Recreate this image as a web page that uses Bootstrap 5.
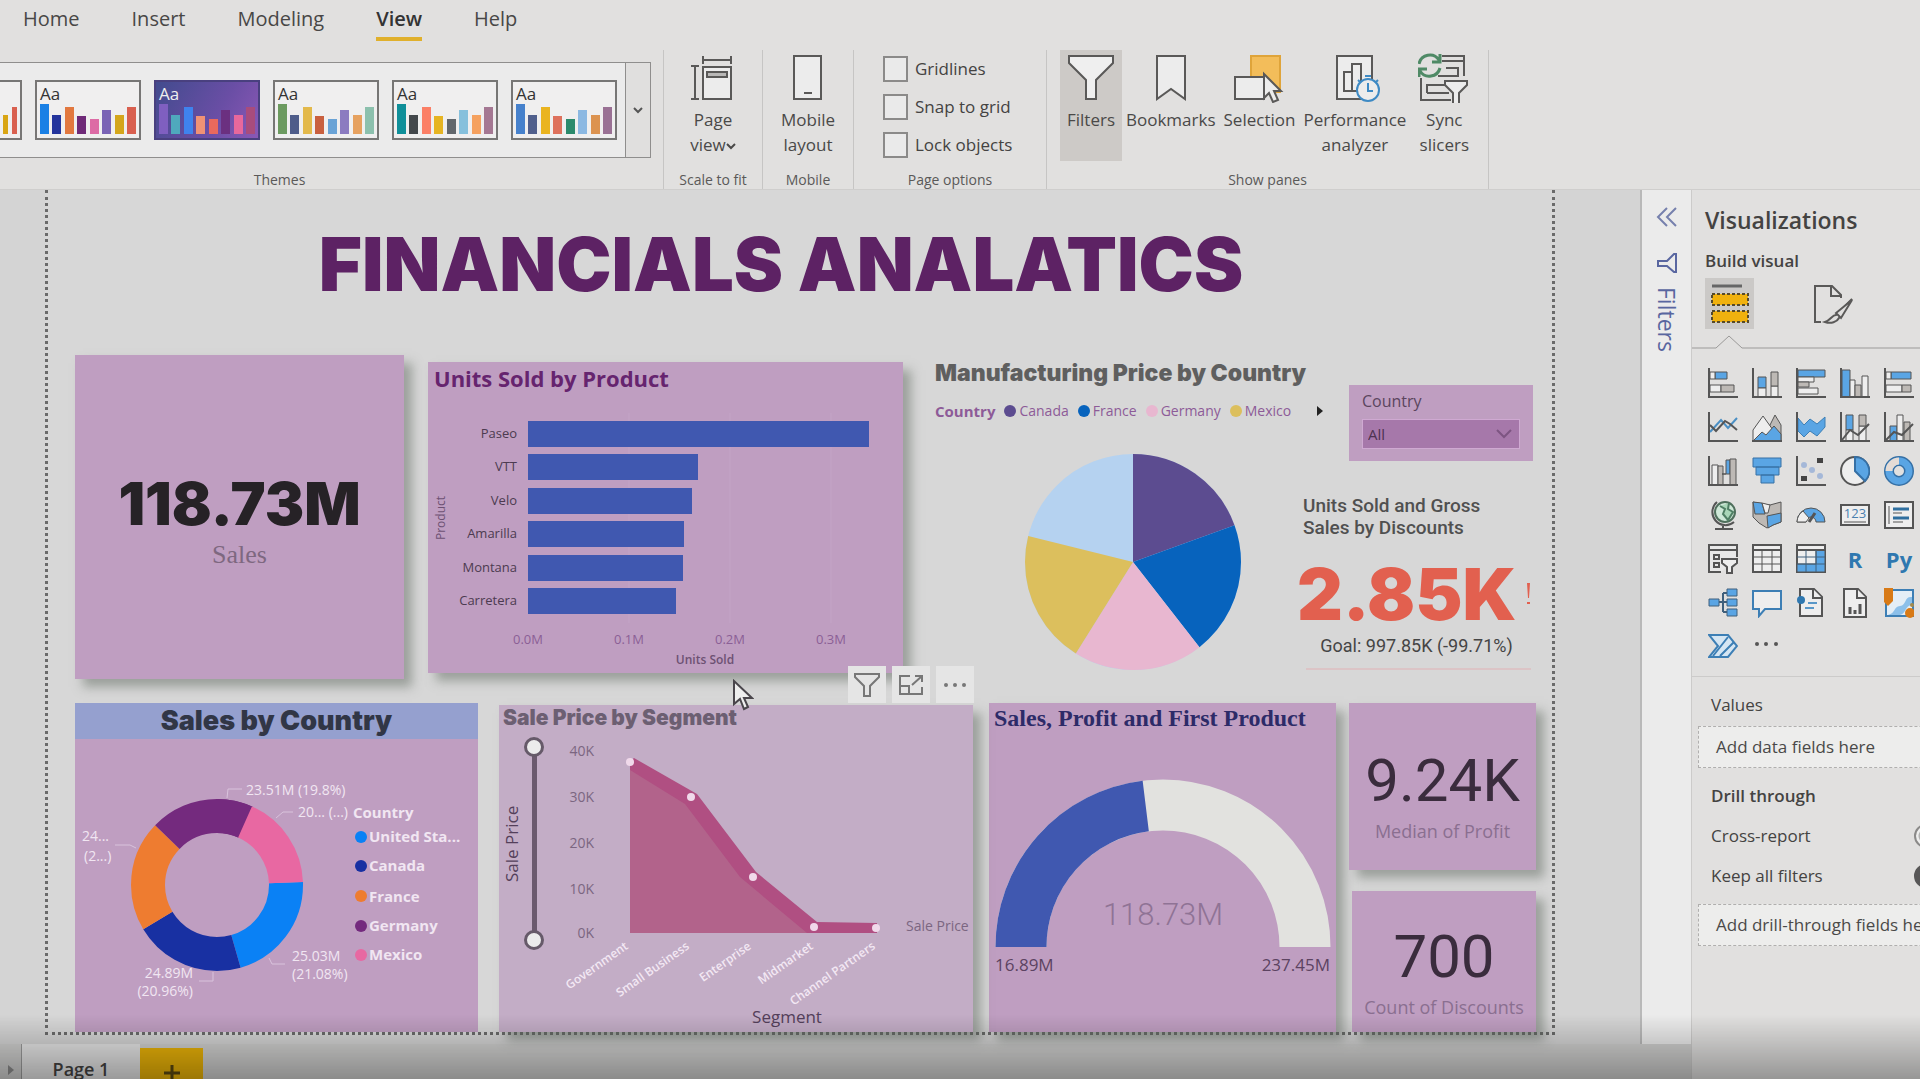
<!DOCTYPE html>
<html lang="en">
<head>
<meta charset="utf-8">
<meta name="viewport" content="width=device-width, initial-scale=1">
<title>Financials report</title>
<link href="https://cdn.jsdelivr.net/npm/bootstrap@5.3.0/dist/css/bootstrap.min.css" rel="stylesheet">
<style>
:root{--ink:#444342;--chrome:#e1e0df;--mauve:#bf9ec1;--royal:#4058b0}
body{font-family:"Open Sans","Noto Sans",sans-serif;font-size:17px;line-height:24px;color:var(--ink);background:var(--chrome)}
button{color:inherit}
.plain{border:0;background:none;padding:0}
.heavy{font-family:Inter,"Liberation Sans",sans-serif;font-weight:900}
.din{font-family:Roboto,"Liberation Sans",sans-serif}
svg{display:block}
svg text{font-family:"Open Sans","Noto Sans",sans-serif}
svg text.din{font-family:Roboto,"Liberation Sans",sans-serif}

/* ribbon */
.ribbon{border-bottom:1px solid #cfcecd;background:var(--chrome)}
.ribbon-tabs{gap:52px;padding:5px 0 9px 23px}
.ribbon-tabs a{font-size:20px;line-height:28px;color:#484746;text-decoration:none;padding-bottom:4px;border-bottom:4px solid transparent}
.ribbon-tabs a.current{font-weight:600;color:#333;border-color:#e0b02c}
.group{height:139px;position:relative;border-right:1px solid #c6c5c4}
.group-name{font-size:14px;line-height:18px;text-align:center;color:#5a5958}
.themes{width:664px}
.themes .group-name{padding-right:104px}
.gallery{width:651px;height:96px;margin-top:12px;border:1px solid #8f8e8d;border-left:0;background:#ebebeb}
.gallery .list{gap:13px;padding-right:8px}
.gallery .more{width:25px;border-left:1px solid #8f8e8d;background:#e0dfde}
.theme{width:106px;height:60px;border:2px solid #777675;background:#f0efef;padding:0;position:relative;overflow:hidden}
.theme.partial{width:22px;border-left:0}
.theme span{position:absolute;left:3px;top:2px;font-size:17px;line-height:20px;color:#333}
.theme.dark{background:linear-gradient(120deg,#424b8e,#6a4ea5 60%,#8a58b5);border-color:#49407f}
.theme.dark span{color:#eee}
.theme .bars{position:absolute;left:3px;right:3px;bottom:4px;height:30px}
.theme .bars i{width:9px}
.big{padding:3px 4px 0;line-height:25px;color:#4a4948}
.big svg{width:52px;height:50px;margin:0 auto 4px;padding:0}
.big.on{background:#cdcac7;width:62px;height:111px}
.panes{padding-left:13px}
.opts{padding:6px 0 0 29px;gap:12px;width:192px}
.opts .form-check{padding:0;min-height:25px}
.opts .form-check .form-check-input{width:25px;height:26px;margin:0 7px 0 0;float:none;flex:none;border:2px solid #8b8a89;border-radius:0;background-color:#eaeaea}
.opts label{line-height:26px;white-space:nowrap}

/* report */
.work{background:#d4d4d4}
.report{margin:0 85px 9px 45px;border:3px dotted #6a6a6a;border-top:0;padding:34px 16px 0 27px;background:#d7d7d7;position:relative}
.report h1{font-size:74px;line-height:80px;color:#5d2264;margin:0 49px 51px 0;text-align:center;white-space:nowrap}
.tile{background:var(--mauve);min-width:0}
.lift{box-shadow:8px 8px 10px rgba(95,105,95,.5)}
.row-a{height:324px;margin-bottom:24px}
.w-sales{flex:329 1 0}.w-units{flex:475 1 0;margin:7px 32px 6px 24px}.w-mix{flex:601 1 0;min-width:0}
.big-sales{font-size:59px;line-height:60px;color:#262226;padding-top:119px}
.serif{font-family:"Liberation Serif",serif;font-size:26px;line-height:30px;color:#7e6880;margin-top:6px}
.units-title{font-size:22px;font-weight:700;line-height:28px;color:#66246f;margin:0;padding:2px 6px 1px}
.mix-title{font-size:23px;line-height:28px;color:#5f5f5f;margin:4px 0 12px;white-space:nowrap}
.legend{font-size:14px;color:#8d5b98;gap:9px;white-space:nowrap;margin-bottom:31px}
.legend strong{font-size:15px}
.legend i{width:12px;height:12px;border-radius:50%;margin-right:3px}
.mix-left{flex:362 1 0;min-width:0}.mix-right{flex:239 1 0;min-width:0;padding-top:30px}
.slicer{width:184px;height:76px;padding:6px 13px;margin:0 3px 34px auto;font-size:16px;line-height:20px;color:#5b455e}
.slicer select{width:100%;height:30px;margin-top:8px;padding:0 5px;border:1px solid #cfa9d2;border-radius:0;background:#a678aa;color:#4d3350;font-size:15px;line-height:20px;appearance:none}
.slicer svg{position:absolute;right:8px;bottom:10px;pointer-events:none}
.kpi-title{font-size:19px;line-height:22px;padding-left:6px;margin:0 0 19px;color:#505050;font-weight:500}
.kpi-num{font-size:71px;line-height:72px;color:#e2604f}
.kpi-goal{font-size:18px;line-height:24px;margin-top:4px;text-align:center;color:#454545}
.kpi-line{height:2px;margin:10px 5px 0 9px;background:#dcc4c6}

.row-b{height:329px}
.c1{flex:403 1 0;margin-right:21px}.c2{flex:474 1 0;margin:2px 16px 0 0;background:#c3adc6;position:relative}
.c3{flex:347 1 0;margin-right:13px}.c4{flex:187 1 0}
.band{background:#95a0cf;font-size:27px;line-height:36px;text-align:center;color:#313646;margin:0}
.seg-title{font-size:21px;line-height:26px;color:#6c5f72;margin:0;padding-left:4px}
.serif-title{font-family:"Liberation Serif",serif;font-weight:700;font-size:24px;line-height:26px;color:#2d2b68;margin:0;padding:2px 0 0 5px;white-space:nowrap}
.zoomcol{width:46px;height:213px;margin-top:6px}
.vlabel{writing-mode:vertical-rl;transform:rotate(180deg);width:25px;text-align:center;line-height:25px;color:#54405a}
.zoomer{width:20px;height:213px;position:relative}
.zoomer::before{content:"";position:absolute;left:8px;top:10px;bottom:10px;width:5px;background:#6b5a6e}
.zoomer input{position:absolute;left:0;top:213px;width:213px;height:20px;margin:0;transform-origin:0 0;transform:rotate(-90deg);appearance:none;background:none;pointer-events:none}
.zoomer input::-webkit-slider-thumb{appearance:none;width:20px;height:20px;border-radius:50%;border:3px solid #665a69;background:#ececec;pointer-events:auto}
.tools{position:absolute;right:-1px;bottom:100%;gap:6px;margin-bottom:2px}
.tools button{width:38px;height:37px;background:#e5e5e5}
.tools svg{margin:auto}
.num{font-size:60px;line-height:60px;color:#3a2c3d}
.cap{font-size:18px;color:#8a6f90}
.card-a{height:167px;padding-top:48px;margin-bottom:21px}
.card-b{height:141px;padding-top:36px;margin-left:3px}
.pointer{position:absolute;left:684px;top:489px}

/* filters strip */
.strip{width:51px;background:#ebebeb;border-left:2px solid #b9b9b9;padding-top:16px;color:#5966a0}
.strip .word{writing-mode:vertical-rl;font-size:23px;font-weight:500;line-height:26px;margin-top:13px}

/* visualizations pane */
.pane{width:229px;border-left:1px solid #cccbca;overflow:hidden;white-space:nowrap}
.pane h2{font-size:23px;line-height:30px;font-weight:600;margin:15px 0 14px;padding-left:13px}
.pane h3{font-size:17px;line-height:24px;font-weight:600;margin:0}
.modes{padding:5px 0 6px 13px;gap:54px}
.modes button{width:49px;height:51px}
.modes svg{margin:auto}
.modes .on{background:#cbc9c7}
.icons{display:grid;grid-template-columns:repeat(5,30px);gap:14px;padding:19px 0 14px 16px}
.icons button{width:30px;height:30px}
.icons .script{font-size:22px;line-height:26px;font-weight:700;color:#2f78b0}
.wells{border-top:1px solid #cccbca;padding-top:16px}
.pad{padding-left:19px}
.well{width:300px;margin:9px 0 0 6px;height:42px;line-height:40px;padding-left:17px;border:1px dashed #b0afae;background:#ededec;color:#4a4948}
.toggle{margin-top:16px;width:320px}
.toggle label{width:203px}
.toggle input.form-check-input{width:48px;height:24px;margin:0;border:2px solid #8b8a89;background-color:#efefee}
.toggle input.form-check-input:checked{background-color:#585757;border-color:#585757}

/* page tabs */
.pages{height:35px;background:#d0d0cf;overflow:hidden}
.pages .nav-arrow{width:22px;border-right:1px solid #9b9b9b;color:#8d8d8d;padding-top:20px}
.pages .tab{width:118px;padding-top:15px;font-size:18px;line-height:20px;font-weight:600;background:#e6e6e6;text-align:center}
.pages .add{width:63px;margin-top:4px;background:#eab308;padding-top:16px}
.shade{position:fixed;left:0;right:0;bottom:0;height:64px;background:linear-gradient(rgba(0,0,0,0),rgba(0,0,0,.33));pointer-events:none}
</style>
<script src="https://cdn.jsdelivr.net/npm/bootstrap@5.3.0/dist/js/bootstrap.bundle.min.js"></script>
</head>
<body class="vh-100 overflow-hidden d-flex flex-column">

<header class="ribbon flex-shrink-0">
  <nav class="ribbon-tabs d-flex">
    <a href="#">Home</a><a href="#">Insert</a><a href="#">Modeling</a><a href="#" class="current">View</a><a href="#">Help</a>
  </nav>
  <div class="d-flex">
    <section class="group themes d-flex flex-column justify-content-between">
      <div class="gallery d-flex">
        <div class="list flex-grow-1 d-flex align-items-center" id="themeList"></div>
        <button class="more plain" aria-label="More themes"><svg width="24" height="12" viewBox="0 0 24 12" fill="none" stroke="#555" stroke-width="2"><path d="M8 4l4 4 4-4"/></svg></button>
      </div>
      <div class="group-name">Themes</div>
    </section>
    <section class="group d-flex flex-column justify-content-between" style="width:99px">
      <button class="big plain"><svg viewBox="0 0 52 50" fill="none" stroke="#5a5958" stroke-width="2"><path d="M16 3v8M44 3v8M16 7h28M4 13h8M4 46h8M8 13v33"/><path d="M16 14h28v32H16z" fill="#ececec"/><path d="M20 19h20v5H20z" fill="#b9b8b7"/></svg>Page<br>view<svg style="width:10px;height:8px" class="d-inline m-0" viewBox="0 0 10 8" fill="none" stroke="#4a4948" stroke-width="2"><path d="M1 2l4 4 4-4"/></svg></button>
      <div class="group-name">Scale to fit</div>
    </section>
    <section class="group d-flex flex-column justify-content-between" style="width:91px">
      <button class="big plain"><svg viewBox="0 0 52 50" fill="#ececec" stroke="#5a5958" stroke-width="2"><path d="M12 3h27v43H12zM22 40h8"/></svg>Mobile<br>layout</button>
      <div class="group-name">Mobile</div>
    </section>
    <section class="group d-flex flex-column justify-content-between">
      <div class="opts d-flex flex-column">
        <div class="form-check d-flex mb-0"><input class="form-check-input" type="checkbox" id="grid"><label for="grid">Gridlines</label></div>
        <div class="form-check d-flex mb-0"><input class="form-check-input" type="checkbox" id="snap"><label for="snap">Snap to grid</label></div>
        <div class="form-check d-flex mb-0"><input class="form-check-input" type="checkbox" id="lock"><label for="lock">Lock objects</label></div>
      </div>
      <div class="group-name">Page options</div>
    </section>
    <section class="group d-flex flex-column justify-content-between" style="width:442px">
      <div class="panes d-flex align-items-start">
        <button class="big plain on d-flex flex-column align-items-center"><svg viewBox="0 0 52 50" fill="#efefef" stroke="#5a5958" stroke-width="2"><path d="M4 3h44v7L31 27v19H21V27L4 10z"/></svg>Filters</button>
        <button class="big plain"><svg viewBox="0 0 52 50" fill="#ececec" stroke="#5a5958" stroke-width="2"><path d="M12 3h28v43L26 36 12 46z"/></svg>Bookmarks</button>
        <button class="big plain"><svg viewBox="0 0 52 50" stroke="#5a5958" stroke-width="2"><path d="M18 3h29v36H18z" fill="#f3bd5a" stroke="#dfa43a"/><path d="M2 24h29v22H2z" fill="#ececec"/><path d="M31 21v24l5-5 4 9 5-2-4-9h7z" fill="#ececec"/></svg>Selection</button>
        <button class="big plain"><svg viewBox="0 0 52 50" fill="none" stroke="#5a5958" stroke-width="2"><path d="M8 3h35v43H8z" fill="#ececec"/><path d="M15 19h8v19h-8zM23 11h9v27h-9z"/><circle cx="39" cy="37" r="11" fill="#ececec" stroke="#3e8ac4"/><path d="M39 30v8h5M36 23h6M29 27l3 3M49 27l-3 3" stroke="#3e8ac4"/></svg>Performance<br>analyzer</button>
        <button class="big plain ms-1"><svg viewBox="0 0 52 50" fill="none" stroke="#5a5958" stroke-width="2"><path d="M3 25v22h30M24 3h22v20"/><path d="M24 8h22M28 15h12v8H20M9 40V32h20M9 40h22"/><path d="M27 28h22v4l-8 8v11h-6V40l-8-8z" fill="#ececec"/><path d="M1 11a11 11 0 0 1 20-4M22 15a11 11 0 0 1-20 3M22 1v8h-8M1 24v-8h8" stroke="#4f8a66" stroke-width="3"/></svg>Sync<br>slicers</button>
      </div>
      <div class="group-name">Show panes</div>
    </section>
  </div>
</header>

<main class="flex-grow-1 d-flex" style="min-height:0">
  <div class="flex-grow-1 d-flex flex-column" style="min-width:0">
    <div class="work flex-grow-1 d-flex" style="min-height:0">
      <article class="report flex-grow-1">
        <h1 class="heavy">FINANCIALS ANALATICS</h1>

        <div class="row-a d-flex">
          <section class="tile lift w-sales text-center">
            <div class="heavy big-sales">118.73M</div>
            <div class="serif">Sales</div>
          </section>

          <section class="tile lift w-units">
            <h2 class="units-title">Units Sold by Product</h2>
            <svg viewBox="0 0 475 280" class="w-100" font-size="13" fill="#4c3b50">
              <g stroke="#c3a4c6"><path d="M201 20v210M302 20v210M403 20v210"/></g>
              <g fill="#4058b0"><path d="M100 28h341v26H100zM100 61h170v26H100zM100 95h164v26H100zM100 128h156v26H100zM100 162h155v26H100zM100 195h148v26H100z"/></g>
              <g text-anchor="end"><text x="89" y="45">Paseo</text><text x="89" y="78">VTT</text><text x="89" y="112">Velo</text><text x="89" y="145">Amarilla</text><text x="89" y="179">Montana</text><text x="89" y="212">Carretera</text></g>
              <g text-anchor="middle" fill="#8b5f96"><text x="100" y="251">0.0M</text><text x="201" y="251">0.1M</text><text x="302" y="251">0.2M</text><text x="403" y="251">0.3M</text></g>
              <text x="277" y="271" font-size="12" font-weight="600" text-anchor="middle" fill="#6d5173">Units Sold</text>
              <text transform="translate(17 125) rotate(-90)" font-size="12" text-anchor="middle" fill="#6d5173">Product</text>
            </svg>
          </section>

          <section class="w-mix d-flex">
            <div class="mix-left">
              <h2 class="heavy mix-title">Manufacturing Price by Country</h2>
              <div class="legend d-flex align-items-center">
                <strong>Country</strong>
                <span class="d-flex align-items-center"><i style="background:#5c4c90"></i>Canada</span>
                <span class="d-flex align-items-center"><i style="background:#0763bd"></i>France</span>
                <span class="d-flex align-items-center"><i style="background:#e8b7d0"></i>Germany</span>
                <span class="d-flex align-items-center"><i style="background:#dcbf5d"></i>Mexico</span>
                <button class="plain ms-3" aria-label="Next"><svg width="8" height="12" viewBox="0 0 8 12"><path d="M1 1l6 5-6 5z" fill="#222"/></svg></button>
              </div>
              <svg viewBox="0 0 362 217" class="w-100">
                <g transform="translate(198 108) rotate(-90)" fill="none" stroke-width="108">
                  <circle r="54" pathLength="360" stroke="#b5d2f0"/>
                  <circle r="54" pathLength="360" stroke="#5c4c90" stroke-dasharray="70 290"/>
                  <circle r="54" pathLength="360" stroke="#0763bd" stroke-dasharray="72 288" stroke-dashoffset="-70"/>
                  <circle r="54" pathLength="360" stroke="#e8b7d0" stroke-dasharray="70 290" stroke-dashoffset="-142"/>
                  <circle r="54" pathLength="360" stroke="#dcbf5d" stroke-dasharray="72 288" stroke-dashoffset="-212"/>
                </g>
              </svg>
            </div>
            <div class="mix-right">
              <div class="tile slicer position-relative">
                <label for="country">Country</label>
                <div class="position-relative"><select id="country"><option>All</option></select>
                <svg width="16" height="10" viewBox="0 0 16 10" fill="none" stroke="#7d5582" stroke-width="2"><path d="M1 1l7 7 7-7"/></svg></div>
              </div>
              <h2 class="din kpi-title">Units Sold and Gross<br>Sales by Discounts</h2>
              <div class="d-flex align-items-center justify-content-between pe-1"><span class="heavy kpi-num">2.85K</span><svg width="8" height="24" viewBox="0 0 8 24" fill="#e2604f"><path d="M3 1h3l-1 15H4zM3 20h3v2H3z"/></svg></div>
              <div class="din kpi-goal">Goal: 997.85K (-99.71%)</div>
              <div class="kpi-line"></div>
            </div>
          </section>
        </div>

        <div class="row-b d-flex">
          <section class="tile c1">
            <h2 class="heavy band">Sales by Country</h2>
            <svg viewBox="0 0 403 293" class="w-100" font-size="14" fill="#f1e6f2">
              <g transform="translate(142 146) rotate(-90)" fill="none" stroke-width="34">
                <circle r="69" pathLength="360" stroke="#0a81f5" stroke-dasharray="76 284" stroke-dashoffset="-88"/>
                <circle r="69" pathLength="360" stroke="#1830a2" stroke-dasharray="75 285" stroke-dashoffset="-164"/>
                <circle r="69" pathLength="360" stroke="#ee7c30" stroke-dasharray="75 285" stroke-dashoffset="-239"/>
                <circle r="69" pathLength="360" stroke="#742a7e" stroke-dasharray="70 290" stroke-dashoffset="46"/>
                <circle r="69" pathLength="360" stroke="#742a7e" stroke-dasharray="25 335"/>
                <circle r="69" pathLength="360" stroke="#e868a2" stroke-dasharray="64 296" stroke-dashoffset="-24"/>
              </g>
              <path fill="none" stroke="#d9c3dc" d="M152 59l1-9h14M201 79l7-6h10M61 109l-6-3H40M138 233v9h-14M194 219l3 6h13"/>
              <text x="171" y="56">23.51M (19.8%)</text><text x="223" y="78">20... (...)</text>
              <text x="7" y="102">24...</text><text x="9" y="122">(2...)</text>
              <g text-anchor="end"><text x="118" y="239">24.89M</text><text x="118" y="257">(20.96%)</text></g>
              <text x="217" y="222">25.03M</text><text x="217" y="240">(21.08%)</text>
              <g font-weight="700" font-size="15"><text x="278" y="79">Country</text><text x="294" y="103">United Sta...</text><text x="294" y="132">Canada</text><text x="294" y="163">France</text><text x="294" y="192">Germany</text><text x="294" y="221">Mexico</text></g>
              <circle cx="286" cy="98" r="6" fill="#0a81f5"/><circle cx="286" cy="127" r="6" fill="#1830a2"/><circle cx="286" cy="157" r="6" fill="#ee7c30"/><circle cx="286" cy="187" r="6" fill="#742a7e"/><circle cx="286" cy="216" r="6" fill="#e868a2"/>
            </svg>
          </section>

          <section class="lift c2">
            <div class="tools d-flex">
              <button class="plain" aria-label="Filters"><svg width="28" height="26" viewBox="0 0 28 26" fill="none" stroke="#777" stroke-width="2"><path d="M2 2h24v3l-9 9v10h-6V14L2 5z"/></svg></button>
              <button class="plain" aria-label="Focus mode"><svg width="26" height="22" viewBox="0 0 26 22" fill="none" stroke="#777" stroke-width="2"><path d="M12 2H2v18h22v-7M2 12h9v8M14 11l10-9M17 2h7v6"/></svg></button>
              <button class="plain" aria-label="More options"><svg width="26" height="6" viewBox="0 0 26 6" fill="#777"><circle cx="4" cy="3" r="2"/><circle cx="13" cy="3" r="2"/><circle cx="22" cy="3" r="2"/></svg></button>
            </div>
            <h2 class="heavy seg-title">Sale Price by Segment</h2>
            <div class="d-flex align-items-start">
              <div class="zoomcol d-flex flex-shrink-0">
                <div class="vlabel">Sale Price</div>
                <div class="zoomer"><input type="range" value="0" aria-label="Lowest sale price"><input type="range" value="100" aria-label="Highest sale price"></div>
              </div>
              <svg viewBox="0 0 428 301" class="flex-grow-1" font-size="14" fill="#7b6681">
                <g text-anchor="end"><text x="49" y="25">40K</text><text x="49" y="71">30K</text><text x="49" y="117">20K</text><text x="49" y="163">10K</text><text x="49" y="207">0K</text></g>
                <path fill="#b2638b" d="M85 31l61 35 62 80 61 50 62 1v5H85z"/>
                <path fill="#b04f82" d="M85 30l4-3 63 36 59 78 61 50 60 1v10h-70l-67-56-55-73-55-34z"/>
                <g fill="#f0d9ea"><circle cx="85" cy="31" r="4"/><circle cx="146" cy="66" r="4"/><circle cx="208" cy="146" r="4"/><circle cx="269" cy="196" r="4"/><circle cx="331" cy="197" r="4"/></g>
                <g text-anchor="end" fill="#f3e8f4" font-size="12" font-weight="600">
                  <text transform="translate(84 217) rotate(-35)">Government</text><text transform="translate(145 217) rotate(-35)">Small Business</text><text transform="translate(207 217) rotate(-35)">Enterprise</text><text transform="translate(269 217) rotate(-35)">Midmarket</text><text transform="translate(331 217) rotate(-35)">Channel Partners</text>
                </g>
                <text x="361" y="200">Sale Price</text>
                <text x="242" y="292" font-size="17" text-anchor="middle" fill="#54405a">Segment</text>
              </svg>
            </div>
          </section>

          <section class="tile lift c3">
            <h2 class="serif-title">Sales, Profit and First Product</h2>
            <svg viewBox="0 0 347 301" class="w-100" font-size="17" fill="#5c4361">
              <g transform="translate(174 216) rotate(180)" fill="none" stroke-width="51">
                <circle r="142" pathLength="360" stroke="#e2e2df" stroke-dasharray="180 180"/>
                <circle r="142" pathLength="360" stroke="#4058b0" stroke-dasharray="83 277"/>
              </g>
              <text class="din" x="174" y="194" font-size="31" text-anchor="middle" fill="#8f7395" font-weight="300">118.73M</text>
              <text x="6" y="240">16.89M</text><text x="341" y="240" text-anchor="end">237.45M</text>
            </svg>
          </section>

          <div class="c4">
            <section class="tile lift card-a text-center"><div class="din num">9.24K</div><div class="cap mt-2">Median of Profit</div></section>
            <section class="tile lift card-b text-center"><div class="din num">700</div><div class="cap mt-2">Count of Discounts</div></section>
          </div>
        </div>

        <svg class="pointer" width="22" height="32" viewBox="0 0 22 32" fill="#eee" stroke="#4a464c" stroke-width="2"><path d="M2 2v23l6-5 4 10 4-2-4-9h8z"/></svg>
      </article>

      <aside class="strip d-flex flex-column align-items-center flex-shrink-0">
        <button class="plain" aria-label="Expand"><svg width="22" height="22" viewBox="0 0 22 22" fill="none" stroke="#7680ad" stroke-width="2"><path d="M11 2l-9 9 9 9M20 2l-9 9 9 9"/></svg></button>
        <svg class="mt-4" width="24" height="22" viewBox="0 0 24 22" fill="none" stroke="#5966a0" stroke-width="2"><path d="M21 2v18h-2l-7-6H3V9h9l7-7z"/></svg>
        <div class="word">Filters</div>
      </aside>
    </div>

    <footer class="pages d-flex flex-shrink-0">
      <button class="nav-arrow plain d-flex justify-content-center" aria-label="Next page"><svg width="8" height="12" viewBox="0 0 8 12"><path d="M1 1l6 5-6 5z" fill="#8d8d8d"/></svg></button>
      <button class="tab plain d-flex justify-content-center">Page 1</button>
      <button class="add plain d-flex justify-content-center" aria-label="New page"><svg width="18" height="18" viewBox="0 0 18 18" stroke="#5c4a10" stroke-width="3"><path d="M9 1v16M1 9h16"/></svg></button>
    </footer>
  </div>

  <aside class="pane flex-shrink-0">
    <h2>Visualizations</h2>
    <h3 style="padding-left:13px">Build visual</h3>
    <div class="modes d-flex">
      <button class="plain on" aria-label="Build visual"><svg width="40" height="42" viewBox="0 0 40 42"><path d="M2 3h30" stroke="#666" stroke-width="3"/><path d="M2 11h36v11H2zM2 28h36v11H2z" fill="#f0b10e" stroke="#574a2a" stroke-width="2" stroke-dasharray="3 2"/></svg></button>
      <button class="plain" aria-label="Format visual"><svg width="42" height="42" viewBox="0 0 42 42" fill="none" stroke="#5a5958" stroke-width="2"><path d="M9 39H3V3h17l9 9v3M19 3v10h10"/><path d="M40 16L24 32c-4 0-5 5-11 7 6 2 12 0 14-4z" fill="#e1e0df"/><path d="M24 30l5 5L40 17z" fill="#e1e0df"/></svg></button>
    </div>
    <svg width="400" height="14" fill="none" stroke="#9b9a99"><path d="M0 13h24L37 1l13 12h350"/></svg>

    <div class="icons">
      <button class="plain" aria-label="Stacked bar chart"><svg viewBox="0 0 30 30" fill="#5aa5e4" stroke="#555"><path d="M7 4h12v7H7z"/><path d="M2 4h5v7H2zM2 17h11v7H2z" fill="#eee"/><path d="M13 17h13v7H13z" fill="#bdb9b5"/><path d="M1 0v29h29" fill="none" stroke-width="2"/></svg></button>
      <button class="plain" aria-label="Stacked column chart"><svg viewBox="0 0 30 30" fill="#5aa5e4" stroke="#555"><path d="M6 9h8v11H6z"/><path d="M6 20h8v9H6zM19 18h7v11h-7z" fill="#eee"/><path d="M19 4h7v14h-7z" fill="#bdb9b5"/><path d="M1 0v29h29" fill="none" stroke-width="2"/></svg></button>
      <button class="plain" aria-label="Clustered bar chart"><svg viewBox="0 0 30 30" fill="#5aa5e4" stroke="#555"><path d="M2 2h27v7H2z"/><path d="M2 9h16v5H2z" fill="#eee"/><path d="M2 14h11v5H2z" fill="#bdb9b5"/><path d="M2 20h20v6H2z" fill="#eee"/><path d="M1 0v29h29" fill="none" stroke-width="2"/></svg></button>
      <button class="plain" aria-label="Clustered column chart"><svg viewBox="0 0 30 30" fill="#5aa5e4" stroke="#555"><path d="M2 2h8v27H2z"/><path d="M10 12h5v17h-5zM22 8h6v21h-6z" fill="#eee"/><path d="M15 17h6v12h-6z" fill="#bdb9b5"/><path d="M1 0v29h29" fill="none" stroke-width="2"/></svg></button>
      <button class="plain" aria-label="100% stacked bar chart"><svg viewBox="0 0 30 30" fill="#5aa5e4" stroke="#555"><path d="M7 4h20v7H7z"/><path d="M2 4h5v7H2zM2 17h16v7H2z" fill="#eee"/><path d="M18 17h9v7h-9z" fill="#bdb9b5"/><path d="M1 0v29h29" fill="none" stroke-width="2"/></svg></button>

      <button class="plain" aria-label="Line chart"><svg viewBox="0 0 30 30" fill="none" stroke="#555" stroke-width="2"><path d="M2 20L13 8l7 8 9-10" stroke="#4a8fc4"/><path d="M2 13l6 6 9-10 5 3 7 6"/><path d="M1 0v29h29"/></svg></button>
      <button class="plain" aria-label="Area chart"><svg viewBox="0 0 30 30" stroke="#555" fill="#bdb9b5"><path d="M10 29L23 3l6 10v16z"/><path d="M1 18L11 4l10 14v11H1z" fill="#eee"/><path d="M1 29l9-9 4 3 8-9 7 8v7z" fill="#5aa5e4"/><path d="M0 29h30" stroke-width="2"/></svg></button>
      <button class="plain" aria-label="Stacked area chart"><svg viewBox="0 0 30 30" fill="#5aa5e4" stroke="#3d7fb5"><path d="M2 6l6 7 6-6 7 5 8-7v10l-8 9-7-5-6 6-6-6z"/><path d="M1 0v29h29" fill="none" stroke="#555" stroke-width="2"/></svg></button>
      <button class="plain" aria-label="Line and stacked column chart"><svg viewBox="0 0 30 30" fill="#5aa5e4" stroke="#555"><path d="M6 3h7v15H6z"/><path d="M6 18h7v11H6zM19 14h7v15h-7z" fill="#eee"/><path d="M19 3h7v11h-7z" fill="#bdb9b5"/><path d="M2 28l8-10 8 5 11-11M1 0v29h29" fill="none" stroke-width="2"/></svg></button>
      <button class="plain" aria-label="Line and clustered column chart"><svg viewBox="0 0 30 30" fill="#5aa5e4" stroke="#555"><path d="M6 14h7v15H6z"/><path d="M13 3h6v26h-6z" fill="#eee"/><path d="M20 10h6v19h-6z" fill="#bdb9b5"/><path d="M2 28l8-8 8 3 11-11M1 0v29h29" fill="none" stroke-width="2"/></svg></button>

      <button class="plain" aria-label="Ribbon chart"><svg viewBox="0 0 30 30" fill="#eee" stroke="#555"><path d="M4 9h6v20H4z"/><path d="M10 10h5v19h-5z" fill="#bdb9b5"/><path d="M14 18h4V4h4v14h-8z" fill="#5aa5e4"/><path d="M22 3h6v26h-6z" fill="#bdb9b5"/><path d="M1 0v29h29" fill="none" stroke-width="2"/></svg></button>
      <button class="plain" aria-label="Funnel chart"><svg viewBox="0 0 30 30" fill="#5aa5e4" stroke="#3670a5"><path d="M1 2h28v9H1zM4 11h23v8H4zM9 19h13v8H9z"/></svg></button>
      <button class="plain" aria-label="Scatter chart"><svg viewBox="0 0 30 30" fill="#a5b8d8"><path d="M1 0v29h29" fill="none" stroke="#555" stroke-width="2"/><path d="M21 2h6v5h-6zM5 20h6v5H5z" fill="#444"/><circle cx="8" cy="9" r="3"/><circle cx="16" cy="14" r="3"/><circle cx="24" cy="20" r="3"/></svg></button>
      <button class="plain" aria-label="Pie chart"><svg viewBox="0 0 30 30" fill="#eee" stroke="#555" stroke-width="2"><circle cx="15" cy="15" r="14"/><path d="M15 1a14 14 0 0 1 10 24L15 15z" fill="#5aa5e4" stroke="#3670a5"/></svg></button>
      <button class="plain" aria-label="Donut chart"><svg viewBox="0 0 30 30" fill="none"><circle cx="15" cy="15" r="10" stroke="#3670a5" stroke-width="10"/><circle cx="15" cy="15" r="10" stroke="#5aa5e4" stroke-width="7"/><path d="M5 15A10 10 0 0 1 15 5" stroke="#e5dcd6" stroke-width="7"/></svg></button>

      <button class="plain" aria-label="Map"><svg viewBox="0 0 30 30" fill="none" stroke="#555" stroke-width="2"><circle cx="17" cy="12" r="10" fill="#cfe8d8" stroke="#4f6f5c"/><path d="M12 6l5 3-2 5 5 6 5-8-5-3 1-6" fill="#a9d6b8" stroke="#4f7f64"/><path d="M9 2a13 13 0 1 0 17 20M15 25v3M7 29h18"/></svg></button>
      <button class="plain" aria-label="Filled map"><svg viewBox="0 0 30 30" fill="#5aa5e4" stroke="#555"><path d="M1 2l9 2 8 1 11-3v20l-8 3-6 3-8-5-6-6z" fill="#bdb9b5"/><path d="M1 2l9 1 3 11H3zM15 16l14-3v9l-8 3-5 3z"/><path d="M10 3l8 2-2 8h-3z" fill="#eee"/></svg></button>
      <button class="plain" aria-label="Gauge"><svg viewBox="0 0 30 30" fill="#5aa5e4" stroke="#555"><path d="M1 22a14 14 0 0 1 28 0h-9a5 5 0 0 0-10 0z"/><path d="M1 22a14 14 0 0 1 6-11l6 7-3 4z" fill="#eee"/><path d="M19 13l-6 9" stroke-width="3"/></svg></button>
      <button class="plain" aria-label="Card"><svg viewBox="0 0 30 30" fill="#eee" stroke="#555"><path d="M1 5h28v20H1z" stroke-width="2"/><text x="15" y="18" font-size="13" text-anchor="middle" fill="#4a7fae" stroke="none">123</text><path d="M4 22h22"/></svg></button>
      <button class="plain" aria-label="Multi-row card"><svg viewBox="0 0 30 30" fill="#eee" stroke="#555"><path d="M1 2h28v26H1z" stroke-width="2"/><path d="M9 9h16M9 18h16" stroke="#2f6f9f" stroke-width="3"/><path d="M9 13h9M9 22h10M5 6v18"/></svg></button>

      <button class="plain" aria-label="Slicer"><svg viewBox="0 0 30 30" fill="none" stroke="#555" stroke-width="2"><path d="M13 28H1V1h28v12" fill="#e8e8e8"/><path d="M1 6h28M6 11h5v4H6zM6 19h5v4H6z"/><path d="M14 15h15v4l-5 4v6h-5v-6l-5-4z" fill="#eee"/></svg></button>
      <button class="plain" aria-label="Table"><svg viewBox="0 0 30 30" fill="#eee" stroke="#555"><path d="M1 1h28v27H1z" stroke-width="2"/><path d="M1 6h28" stroke-width="2"/><path d="M1 13h28M1 20h28M10 6v22M20 6v22"/></svg></button>
      <button class="plain" aria-label="Matrix"><svg viewBox="0 0 30 30" fill="#eee" stroke="#555"><path d="M1 1h28v27H1z" stroke-width="2"/><path d="M20 6h9v22H1v-8h19z" fill="#5aa5e4"/><path d="M1 6h28" stroke-width="2"/><path d="M1 13h28M1 20h28M10 6v22M20 6v22" stroke="#40607c"/></svg></button>
      <button class="plain script">R</button>
      <button class="plain script">Py</button>

      <button class="plain" aria-label="Key influencers"><svg viewBox="0 0 30 30" fill="#5aa5e4" stroke="#40607c"><path d="M11 14h9M15 5v19M15 5h4M15 24h4" stroke-width="2"/><path d="M1 11h10v7H1zM19 1h10v7H19zM19 11h10v7H19zM19 21h10v7H19z"/></svg></button>
      <button class="plain" aria-label="Q and A"><svg viewBox="0 0 30 30" fill="#eee" stroke="#3d7fb5" stroke-width="2"><path d="M1 3h28v18H13l-6 7v-7H1z"/></svg></button>
      <button class="plain" aria-label="Smart narrative"><svg viewBox="0 0 30 30" fill="#eee" stroke="#555" stroke-width="2"><path d="M4 1h14l8 8v19H4z"/><path d="M17 1v9h9"/><path d="M12 15h9M9 20h9" stroke="#5a98c8"/><circle cx="5" cy="12" r="4" fill="#2f78b0" stroke="none"/></svg></button>
      <button class="plain" aria-label="Paginated report"><svg viewBox="0 0 30 30" fill="#eee" stroke="#555" stroke-width="2"><path d="M4 1h14l8 8v20H4z"/><path d="M17 1v9h9"/><path d="M10 26v-7M15 26v-4M20 26V16" stroke-width="3"/></svg></button>
      <button class="plain" aria-label="ArcGIS map"><svg viewBox="0 0 30 30" fill="#e4eef6" stroke="#3d7fb5" stroke-width="2"><path d="M2 2h27v26H2z"/><path d="M4 27c8-2 5-8 12-9s4-10 12-9v8c-7 0-6 9-12 10z" fill="#8cc0ea" stroke="none"/><path d="M-1-1h10v14l-5 5-5-5z" fill="#d87a16" stroke="none"/><circle cx="26" cy="25" r="5" fill="#d87a16" stroke="none"/><circle cx="28" cy="17" r="2" fill="#a58a4a" stroke="none"/></svg></button>

      <button class="plain" aria-label="Power Automate"><svg viewBox="0 0 30 30" fill="#d5e6f3" stroke="#3d7fb5" stroke-width="2"><path d="M1 3h19l9 11-9 11H1l9-11z"/><path d="M5 24L20 5M12 24L26 10"/></svg></button>
      <button class="plain" aria-label="Get more visuals"><svg viewBox="0 0 30 30" fill="#555"><circle cx="5" cy="12" r="2"/><circle cx="14" cy="12" r="2"/><circle cx="24" cy="12" r="2"/></svg></button>
    </div>

    <div class="wells">
      <div class="pad">Values</div>
      <div class="well">Add data fields here</div>
      <h3 class="pad mt-3">Drill through</h3>
      <div class="pad toggle d-flex form-switch"><label for="cross">Cross-report</label><input class="form-check-input" role="switch" type="checkbox" id="cross"></div>
      <div class="pad toggle d-flex form-switch"><label for="keep">Keep all filters</label><input class="form-check-input" role="switch" type="checkbox" id="keep" checked></div>
      <div class="well mt-3">Add drill-through fields here</div>
    </div>
  </aside>
</main>
<div class="shade"></div>

<script>
// Colours of the eight sample bars in each theme preview
const heights = [30, 19, 27, 18, 15, 24, 19, 27];
const themes = [
  {cls: 'partial', colors: ['#d9a514', '#d9604f']},
  {cls: '', colors: ['#1a80e5', '#24349c', '#e2783f', '#6f2a78', '#dd6ba5', '#7a63b5', '#d4a61c', '#d9604f']},
  {cls: 'dark', colors: ['#7f5fc0', '#4fa9bd', '#3f83ee', '#f09275', '#e9695d', '#6b3080', '#e8689c', '#a84c7c']},
  {cls: '', colors: ['#6c9a5f', '#4f5d8a', '#e3b94b', '#c9603f', '#6aa3d6', '#8b7bc0', '#e6a15f', '#8cc0ad']},
  {cls: '', colors: ['#0f8f99', '#43484b', '#fb7f66', '#e6b422', '#62676c', '#86c0dc', '#f5a15f', '#a57893']},
  {cls: '', colors: ['#4681cc', '#505f8c', '#eab41f', '#de715c', '#2c8a6c', '#8bb8e2', '#dc9350', '#9a7194']}
];
document.getElementById('themeList').innerHTML = themes.map(t => {
  const h = heights.slice(-t.colors.length);
  const bars = t.colors.map((c, i) => `<i style="height:${h[i]}px;background:${c}"></i>`).join('');
  return `<button class="theme flex-shrink-0 ${t.cls}" aria-label="Theme">${t.cls === 'partial' ? '' : '<span>Aa</span>'}` +
         `<div class="bars d-flex align-items-end justify-content-${t.cls === 'partial' ? 'end gap-1' : 'between'}">${bars}</div></button>`;
}).join('');
</script>
</body>
</html>
